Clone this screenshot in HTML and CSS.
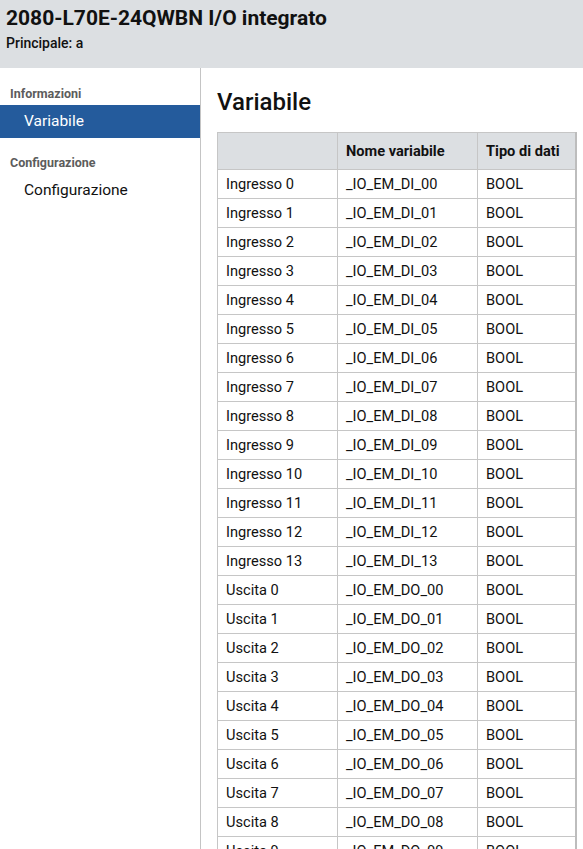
FILE: index.html
```html
<!DOCTYPE html>
<html lang="it">
<head>
<meta charset="utf-8">
<title>2080-L70E-24QWBN I/O integrato</title>
<link rel="stylesheet" href="styles.css">
</head>
<body>
<header class="top">
  <h1 class="title">2080-L70E-24QWBN I/O integrato</h1>
  <div class="subtitle">Principale: a</div>
</header>
<div class="layout">
  <nav class="sidebar">
    <div class="group-label">Informazioni</div>
    <div class="nav-item active">Variabile</div>
    <div class="group-label">Configurazione</div>
    <div class="nav-item">Configurazione</div>
  </nav>
  <main class="content">
    <h2 class="heading">Variabile</h2>
    <table class="vars">
      <thead>
        <tr><th></th><th>Nome variabile</th><th>Tipo di dati</th></tr>
      </thead>
      <tbody>
        <tr><td>Ingresso 0</td><td>_IO_EM_DI_00</td><td>BOOL</td></tr>
        <tr><td>Ingresso 1</td><td>_IO_EM_DI_01</td><td>BOOL</td></tr>
        <tr><td>Ingresso 2</td><td>_IO_EM_DI_02</td><td>BOOL</td></tr>
        <tr><td>Ingresso 3</td><td>_IO_EM_DI_03</td><td>BOOL</td></tr>
        <tr><td>Ingresso 4</td><td>_IO_EM_DI_04</td><td>BOOL</td></tr>
        <tr><td>Ingresso 5</td><td>_IO_EM_DI_05</td><td>BOOL</td></tr>
        <tr><td>Ingresso 6</td><td>_IO_EM_DI_06</td><td>BOOL</td></tr>
        <tr><td>Ingresso 7</td><td>_IO_EM_DI_07</td><td>BOOL</td></tr>
        <tr><td>Ingresso 8</td><td>_IO_EM_DI_08</td><td>BOOL</td></tr>
        <tr><td>Ingresso 9</td><td>_IO_EM_DI_09</td><td>BOOL</td></tr>
        <tr><td>Ingresso 10</td><td>_IO_EM_DI_10</td><td>BOOL</td></tr>
        <tr><td>Ingresso 11</td><td>_IO_EM_DI_11</td><td>BOOL</td></tr>
        <tr><td>Ingresso 12</td><td>_IO_EM_DI_12</td><td>BOOL</td></tr>
        <tr><td>Ingresso 13</td><td>_IO_EM_DI_13</td><td>BOOL</td></tr>
        <tr><td>Uscita 0</td><td>_IO_EM_DO_00</td><td>BOOL</td></tr>
        <tr><td>Uscita 1</td><td>_IO_EM_DO_01</td><td>BOOL</td></tr>
        <tr><td>Uscita 2</td><td>_IO_EM_DO_02</td><td>BOOL</td></tr>
        <tr><td>Uscita 3</td><td>_IO_EM_DO_03</td><td>BOOL</td></tr>
        <tr><td>Uscita 4</td><td>_IO_EM_DO_04</td><td>BOOL</td></tr>
        <tr><td>Uscita 5</td><td>_IO_EM_DO_05</td><td>BOOL</td></tr>
        <tr><td>Uscita 6</td><td>_IO_EM_DO_06</td><td>BOOL</td></tr>
        <tr><td>Uscita 7</td><td>_IO_EM_DO_07</td><td>BOOL</td></tr>
        <tr><td>Uscita 8</td><td>_IO_EM_DO_08</td><td>BOOL</td></tr>
        <tr><td>Uscita 9</td><td>_IO_EM_DO_09</td><td>BOOL</td></tr>
      </tbody>
    </table>
  </main>
</div>
</body>
</html>
```
FILE: styles.css
```css
html, body {
  margin: 0;
  padding: 0;
  background: #ffffff;
  font-family: Roboto, "Liberation Sans", sans-serif;
  color: #111;
}
.top {
  background: #dcdfe2;
  height: 68px;
  box-sizing: border-box;
  padding: 6px 6px 0;
}
.title {
  margin: 0;
  font-size: 21px;
  font-weight: 700;
  line-height: 25px;
  color: #111;
}
.subtitle {
  margin-top: 4px;
  font-size: 14px;
  font-weight: 500;
  line-height: 17px;
  color: #111;
}
.layout {
  display: flex;
  align-items: stretch;
  min-height: 781px;
}
.sidebar {
  width: 200px;
  flex: none;
  border-right: 1px solid #c4c4c4;
  padding-top: 19px;
}
.group-label {
  font-size: 12.5px;
  font-weight: 700;
  color: #5c5c5c;
  padding-left: 10px;
  line-height: 14px;
  margin-bottom: 4px;
}
.nav-item {
  height: 33px;
  line-height: 33px;
  padding-left: 24px;
  font-size: 15.5px;
  color: #111;
  margin-bottom: 18px;
}
.nav-item.active {
  background: #245b9c;
  color: #ffffff;
}
.content {
  flex: 1;
  padding-left: 16px;
  padding-right: 7px;
}
.heading {
  margin: 19px 0 0;
  font-size: 24px;
  font-weight: 500;
  line-height: 30px;
  color: #111;
}
.vars {
  margin-top: 15px;
  width: 360px;
  border-collapse: collapse;
  font-size: 14.6px;
  border-right: 2px solid #bdbdbd;
}
.vars th, .vars td {
  border: 1px solid #c6c6c6;
  text-align: left;
  padding: 0 8px;
  color: #111;
}
.vars th {
  background: #dcdfe2;
  height: 36px;
  font-weight: 700;
}
.vars td {
  height: 28px;
}
.vars th:nth-child(1), .vars td:nth-child(1) { width: 103px; }
.vars th:nth-child(2), .vars td:nth-child(2) { width: 123px; }
```
